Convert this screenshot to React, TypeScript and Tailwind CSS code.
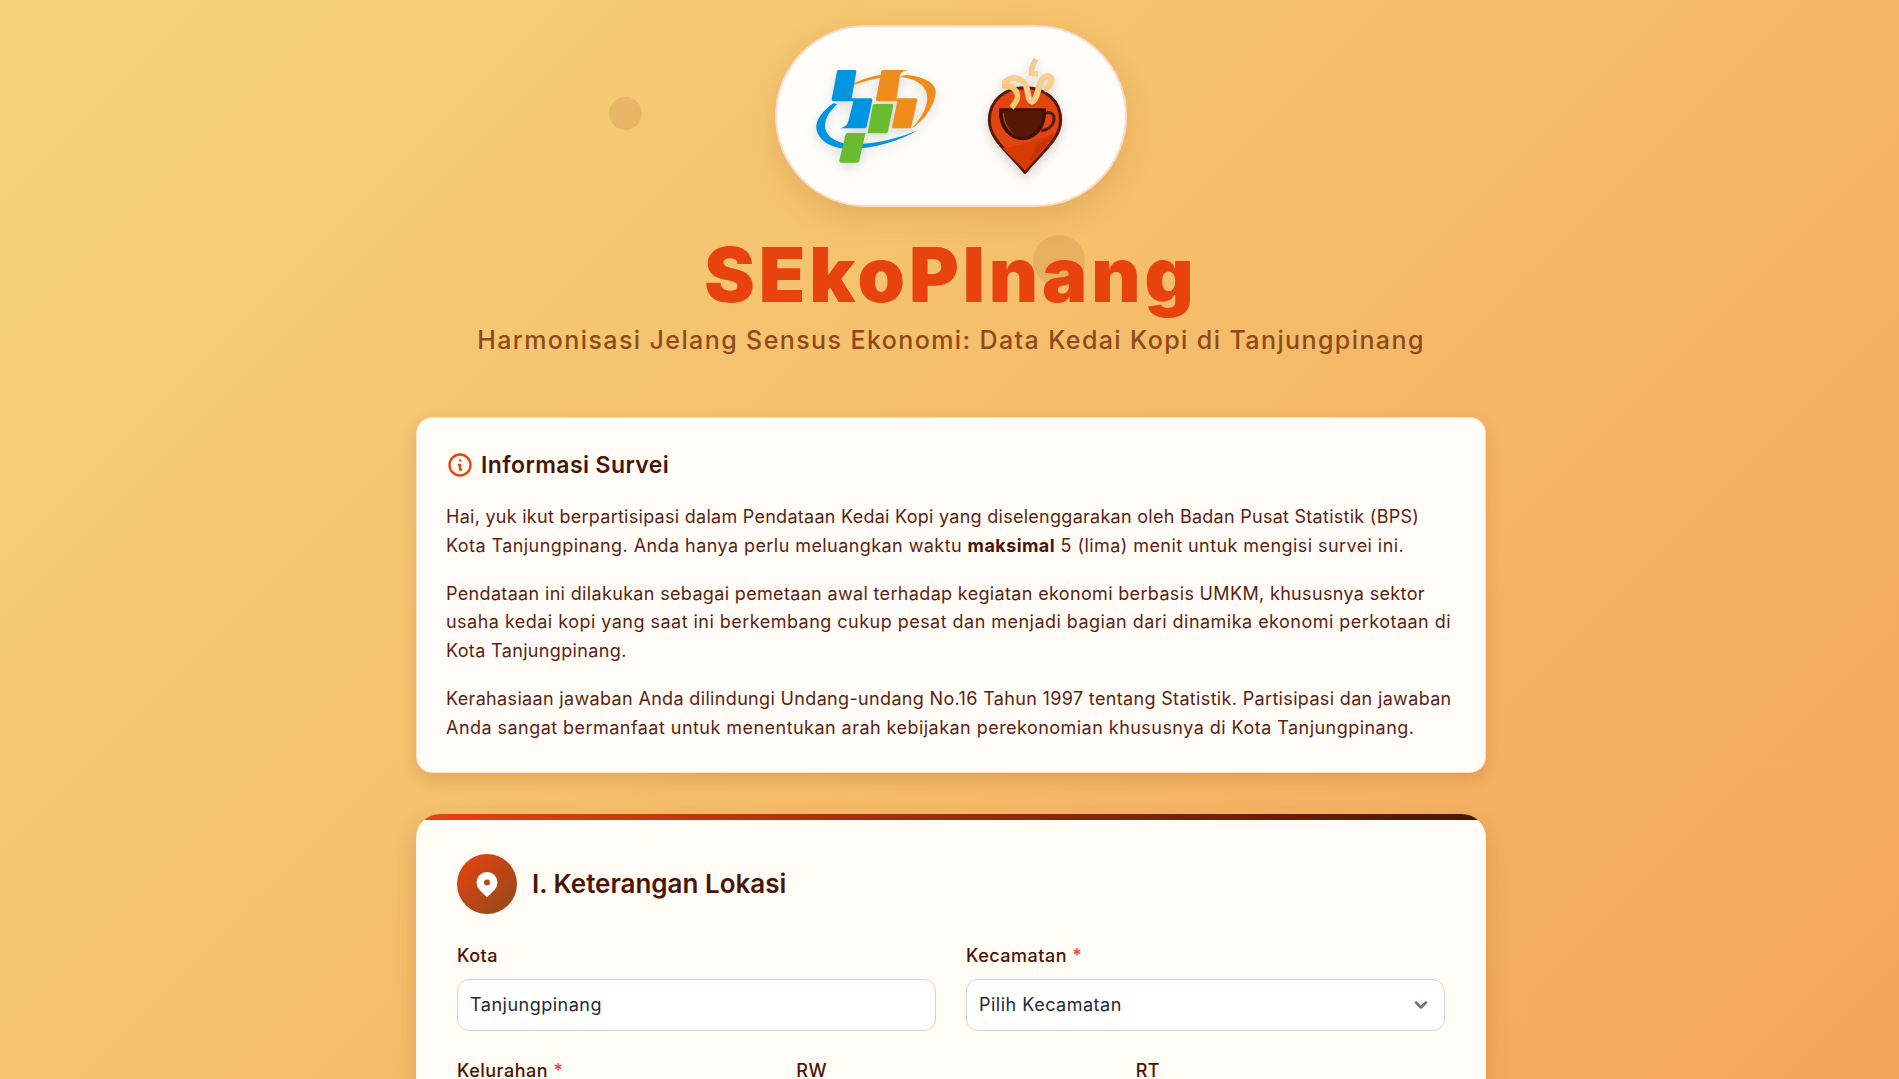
import { ChevronDown } from 'lucide-react'
import { HiLocationMarker, HiOutlineInformationCircle } from 'react-icons/hi'

function BpsLogo() {
  return (
    <svg viewBox="0 0 450 420" className="mt-[13px] h-[140px] w-[150px] shrink-0 drop-shadow-[0_4px_6px_rgba(0,0,0,0.15)]">
      <path d="M125 150C170 122 205 110 245 104L243 113C200 120 165 133 125 150Z" fill="#ee8c1c" />
      <path d="M318 104C375 110 410 130 407 160C404 195 375 240 335 266C365 232 388 195 380 160C372 130 340 115 300 110Z" fill="#ee8c1c" />
      <path d="M100 190C65 215 48 240 49 262C50 295 85 322 132 326C210 330 295 305 355 270C295 296 205 318 140 311C105 307 75 285 75 258C75 235 90 212 112 192Z" fill="#0095de" />
      <path d="M116 90H165Q170 90 169 95L155 175H212Q218 175 217 181L200 260Q199 265 193 265H118C135 262 143 255 146 240L160 184H100Q94 183 95 177L111 94Q112 90 116 90Z" fill="#0095de" />
      <path d="M249 90H328C312 92 304 96 300 106L290 175H348Q353 175 352 181L334 260Q333 265 327 265H280Q275 265 276 260L292 184H233Q227 183 228 177L244 94Q245 90 249 90Z" fill="#ee8c1c" />
      <path d="M225 192H276Q281 192 280 197L264 274Q263 280 257 280H196L178 362Q177 368 171 368H124Q117 368 118 362L136 285Q137 280 143 279H203L218 197Q219 192 225 192Z" fill="#6bbb30" />
    </svg>
  )
}

function CoffeePin() {
  return (
    <svg viewBox="0 0 330 420" className="mt-[18px] h-[140px] w-[110px] shrink-0 drop-shadow-[0_4px_6px_rgba(0,0,0,0.18)]">
      <path d="M165 383C120 325 58 285 58 225C58 165 105 128 165 128C225 128 272 165 272 225C272 285 210 325 165 383Z" fill="#e2450f" stroke="#551a08" strokeWidth="9" strokeLinejoin="round" />
      <path d="M98 310C150 300 210 285 256 262C240 300 195 345 165 377C140 350 115 330 98 310Z" fill="#d83a06" />
      <path d="M180 350C205 325 235 295 250 270C230 280 215 290 200 300Z" fill="#c43408" />
      <path d="M224 206C240 198 254 206 252 224C250 242 234 254 214 258" fill="none" stroke="#551a08" strokeWidth="9" />
      <path d="M87 190H228V205C228 250 195 286 158 286C120 286 87 250 87 205Z" fill="#3f1003" />
      <path d="M98 197H218V206C218 244 190 276 158 276C126 276 98 244 98 206Z" fill="#571705" />
      <path d="M102 205C104 235 118 258 135 270C116 262 100 235 98 205Z" fill="#a0541f" />
      <path d="M124 188C146 165 150 145 128 128C112 122 100 122 96 122" fill="none" stroke="#f8c670" strokeWidth="17" />
      <path d="M100 116C125 88 155 98 168 122C176 142 172 165 186 170C200 165 204 135 210 115C218 95 235 88 244 100C246 115 234 130 222 134" fill="none" stroke="#f9cd8c" strokeWidth="18" />
      <path d="M198 42C188 58 182 72 184 92" fill="none" stroke="#f6c897" strokeWidth="16" />
      <rect x="186" y="78" width="18" height="16" fill="#f9d27b" />
    </svg>
  )
}

function Field({ label, required, value }: { label: string; required?: boolean; value: string }) {
  return (
    <div className="flex flex-col">
      <label className="mb-[10px] text-[18px] font-medium leading-[26px] tracking-[0.5px] text-[#4a1505]">
        {label} {required && <span className="text-[#ef4444]">*</span>}
      </label>
      <input
        readOnly
        value={value}
        className="h-[52px] rounded-[12px] border border-[#d1d5db] bg-white px-[12px] text-[18px] tracking-[0.5px] text-[#1f2937]"
      />
    </div>
  )
}

function SelectField({ label, value }: { label: string; value: string }) {
  return (
    <div className="flex flex-col">
      <label className="mb-[10px] text-[18px] font-medium leading-[26px] tracking-[0.5px] text-[#4a1505]">
        {label} <span className="text-[#ef4444]">*</span>
      </label>
      <div className="relative">
        <select className="h-[52px] w-full appearance-none rounded-[12px] border border-[#d1d5db] bg-white px-[12px] text-[18px] tracking-[0.5px] text-[#1f2937]">
          <option>{value}</option>
        </select>
        <ChevronDown className="pointer-events-none absolute right-[14px] top-[16px] h-5 w-5 text-[#6b7280]" strokeWidth={3} />
      </div>
    </div>
  )
}

export default function App() {
  return (
    <div className="relative h-screen overflow-hidden bg-[linear-gradient(135deg,#f6d47c_0%,#f5bd6a_50%,#f4a65a_100%)] font-['Inter',sans-serif]">
      <div className="absolute left-[609px] top-[97px] h-[33px] w-[33px] rounded-full bg-[#c98a4a]/30" />
      <div className="absolute left-[1033px] top-[235px] h-[52px] w-[52px] rounded-full bg-[#c98a4a]/30" />

      <div className="relative ml-[416px] flex w-[1070px] flex-col items-center pt-[25px]">
        <div className="flex h-[182px] w-[352px] items-start gap-[20px] rounded-full border-2 border-[#f8dccb] bg-[#fffdf9] pl-[23px] shadow-[0_10px_30px_rgba(160,90,20,0.2)]">
          <BpsLogo />
          <CoffeePin />
        </div>

        <h1 className="mt-[22px] text-[76px] font-black leading-[90px] tracking-[3.9px] text-[#e8430f]">SEkoPInang</h1>
        <p className="mt-[3px] text-[25px] font-medium leading-[36px] tracking-[1.4px] text-[#8f4a1b]">
          Harmonisasi Jelang Sensus Ekonomi: Data Kedai Kopi di Tanjungpinang
        </p>

        <section className="mt-[59px] w-full rounded-[16px] border border-[#f8e0d0] bg-[#fffcf8] px-[29px] pb-[29px] pt-[30px] shadow-[0_6px_16px_rgba(120,60,10,0.18)]">
          <h2 className="flex items-center gap-[7px] text-[23px] font-semibold leading-[34px] tracking-[0.4px] text-[#4a1505]">
            <HiOutlineInformationCircle className="h-[28px] w-[28px] text-[#e8430f]" />
            Informasi Survei
          </h2>
          <div className="mt-[21px] flex flex-col gap-[19px] whitespace-nowrap text-[18px] leading-[28.8px] text-[#5c1f10]">
            <p>
              <span className="block tracking-[0.27px]">Hai, yuk ikut berpartisipasi dalam Pendataan Kedai Kopi yang diselenggarakan oleh Badan Pusat Statistik (BPS)</span>
              <span className="block tracking-[0.43px]">
                Kota Tanjungpinang. Anda hanya perlu meluangkan waktu <b className="font-bold text-[#4a1505]">maksimal</b> 5 (lima) menit untuk mengisi survei ini.
              </span>
            </p>
            <p>
              <span className="block tracking-[0.34px]">Pendataan ini dilakukan sebagai pemetaan awal terhadap kegiatan ekonomi berbasis UMKM, khususnya sektor</span>
              <span className="block tracking-[0.47px]">usaha kedai kopi yang saat ini berkembang cukup pesat dan menjadi bagian dari dinamika ekonomi perkotaan di</span>
              <span className="block tracking-[0.35px]">Kota Tanjungpinang.</span>
            </p>
            <p>
              <span className="block tracking-[0.34px]">Kerahasiaan jawaban Anda dilindungi Undang-undang No.16 Tahun 1997 tentang Statistik. Partisipasi dan jawaban</span>
              <span className="block tracking-[0.46px]">Anda sangat bermanfaat untuk menentukan arah kebijakan perekonomian khususnya di Kota Tanjungpinang.</span>
            </p>
          </div>
        </section>

        <section className="mt-[41px] w-full overflow-hidden rounded-[24px] bg-[#fffbf5] shadow-[0_10px_25px_rgba(120,60,10,0.2)]">
          <div className="h-[6px] bg-[linear-gradient(90deg,#e8430f,#4a1505)]" />
          <div className="px-[41px] pb-[40px] pt-[34px]">
            <div className="flex items-center gap-[15px]">
              <div className="flex h-[60px] w-[60px] items-center justify-center rounded-full bg-[linear-gradient(135deg,#e8430f,#8f4a1b)]">
                <HiLocationMarker className="h-[30px] w-[30px] text-white" />
              </div>
              <h2 className="text-[26px] font-semibold text-[#4a1505]">I. Keterangan Lokasi</h2>
            </div>
            <div className="mt-[29px] grid grid-cols-2 gap-x-[30px]">
              <Field label="Kota" value="Tanjungpinang" />
              <SelectField label="Kecamatan" value="Pilih Kecamatan" />
            </div>
            <div className="mt-[27px] grid grid-cols-3 gap-x-[30px]">
              <Field label="Kelurahan" required value="" />
              <Field label="RW" value="" />
              <Field label="RT" value="" />
            </div>
          </div>
        </section>
      </div>
    </div>
  )
}
